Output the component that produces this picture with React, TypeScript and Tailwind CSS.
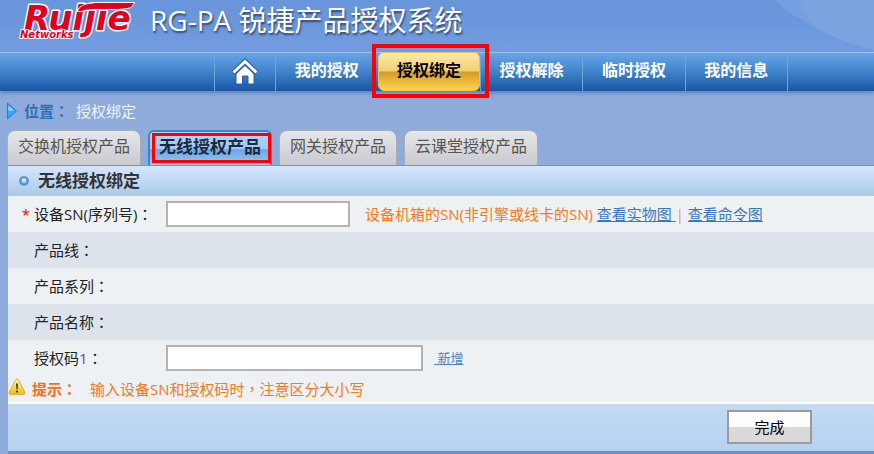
import { useState } from "react";
import type { ReactNode } from "react";

const NAV_ITEMS = ["我的授权", "授权绑定", "授权解除", "临时授权", "我的信息"];
const TABS = ["交换机授权产品", "无线授权产品", "网关授权产品", "云课堂授权产品"];
const INFO_ROWS = ["产品线", "产品系列", "产品名称"];

// Full-width punctuation sits in the middle of its cell
function Punct({ children }: { children: ReactNode }) {
  return <span className="font-['Noto_Sans_CJK_TC',sans-serif]">{children}</span>;
}

function Logo() {
  return (
    <svg width="122" height="46" viewBox="0 0 122 46" role="img" aria-label="Ruijie Networks" className="shrink-0 overflow-visible">
      <g
        fill="#e2001f"
        stroke="#fff"
        strokeWidth="3"
        strokeLinejoin="round"
        paintOrder="stroke"
        fontFamily="DejaVu Sans"
        fontWeight="bold"
        fontStyle="italic"
      >
        <text x="4" y="30" fontSize="34">Ruijie</text>
        {/* Bar that joins the dots of the letters */}
        <path strokeWidth="2" d="M58 11C60 5 68 3 80 3H114L111 7C104 9 98 9 88 9C74 9 66 9 62 11Z" />
        <text x="0" y="38" fontSize="10" strokeWidth="2">Networks</text>
      </g>
    </svg>
  );
}

function HomeIcon() {
  return (
    <svg width="28" height="28" viewBox="0 0 28 28" aria-hidden="true">
      <path d="M2 15L14 3.500L26 15" fill="none" stroke="#2b5f9f" strokeWidth="5" />
      <path d="M2.500 14.500L14 3.500L25.500 14.500" fill="none" stroke="#fff" strokeWidth="3" />
      <path d="M5 16L14 7.500L23 16V26H17V18H11.500V26H5Z" fill="#fff" stroke="#2b5f9f" strokeWidth="1" />
    </svg>
  );
}

function WarningIcon() {
  return (
    <svg width="18" height="18" viewBox="0 0 18 18" aria-hidden="true" className="mb-1 shrink-0">
      <defs>
        <linearGradient id="warn" x1="0" y1="0" x2="0" y2="1">
          <stop offset="0" stopColor="#fff6a0" />
          <stop offset="1" stopColor="#f2ba14" />
        </linearGradient>
      </defs>
      <path
        d="M9 1Q10 1 10.800 2.500L17 14.500Q17.500 16.500 15.500 16.500H2.500Q0.500 16.500 1 14.500L7.200 2.500Q8 1 9 1Z"
        fill="url(#warn)"
        stroke="#d3ae4a"
        strokeLinejoin="round"
      />
      <path d="M8 5.500H10L9.600 11.500H8.400Z" fill="#443c20" />
      <circle cx="9" cy="13.600" r="1.100" fill="#443c20" />
    </svg>
  );
}

export default function App() {
  const [active, setActive] = useState(1);
  const [sn, setSn] = useState("");
  const [code, setCode] = useState("");

  return (
    <div className="min-h-screen overflow-hidden bg-[#8fabdb] font-['Open_Sans','Noto_Sans_CJK_SC',sans-serif] text-[15px] leading-5 text-[#222]">
      {/* Banner */}
      <header className="relative flex h-[52px] items-start gap-2 bg-linear-to-b from-[#6996db] via-[#6b98dc] to-[#769ce1] pl-5">
        <svg
          className="absolute top-0 right-0"
          width="100"
          height="52"
          viewBox="0 0 100 52"
          aria-hidden="true"
        >
          <path d="M0 0C26 22 60 40 100 50V0Z" fill="#769fdf" />
          <path d="M26 0C31 12 36 22 43 28C60 38 80 45 100 50V0Z" fill="#7ca3e0" />
        </svg>
        <Logo />
        <h1 className="relative pt-1 text-[28px] leading-8 whitespace-nowrap text-white [text-shadow:1px_2px_2px_#30466f]">
          RG-PA 锐捷产品授权系统
        </h1>
      </header>

      {/* Main navigation */}
      <nav className="relative flex h-[39px] border-t border-[#9cc4ee] bg-linear-to-b from-[#68a5e6] via-[#3f83cb] to-[#1855a3] pl-[214px] shadow-[0_2px_4px_#5f7fb8]">
        <a href="#home" aria-label="首页" className="flex w-[61px] items-center justify-center border-l border-[#6fa5de]">
          <HomeIcon />
        </a>
        <div className="grid w-[513px] grid-cols-5 border-r border-[#6fa5de]">
          {NAV_ITEMS.map((item, i) => (
            <a
              key={item}
              href="#nav"
              className={
                i === 1
                  ? "relative -mt-px ml-px flex items-center justify-center rounded-md border border-[#e9c25e] bg-[linear-gradient(#fdeaa8,#f3cf72_48%,#d9982a_52%,#fbd650)] pb-1 text-base font-bold text-black"
                  : "flex items-center justify-center border-l border-[#6fa5de] pb-1 text-base font-bold text-white"
              }
            >
              {item}
              {i === 1 && <span className="pointer-events-none absolute -top-[9px] -right-[10px] -bottom-2 -left-[7px] border-4 border-[#f00]" />}
            </a>
          ))}
        </div>
      </nav>

      {/* Breadcrumb */}
      <div className="flex h-[39px] items-center pl-[7px]">
        <svg width="10" height="18" viewBox="0 0 10 18" aria-hidden="true">
          <path d="M0.500 1L9.500 9L0.500 17Z" fill="#3ba6f5" stroke="#1f7fd0" />
          <path d="M1.500 3.500L7 8.500L1.500 9Z" fill="#8fd2ff" />
        </svg>
        <span className="ml-[7px] font-bold text-[#2c70b9]">
          位置<Punct>：</Punct>
        </span>
        <span className="ml-[7px] text-[#eef4ff]">授权绑定</span>
      </div>

      {/* Product tabs */}
      <div className="flex h-[35px] items-stretch gap-[7px] pl-[7px]" role="tablist">
        {TABS.map((tab, i) => (
          <button
            key={tab}
            type="button"
            role="tab"
            aria-selected={active === i}
            onClick={() => setActive(i)}
            className={
              active === i
                ? "relative rounded-t-md border-2 border-b-0 border-[#4a7fc8] bg-[linear-gradient(#b4d5f8,#a0c8f4_50%,#6ba6e8_54%,#9cc6f3)] px-[9px] pb-1 text-[17px] font-bold whitespace-nowrap text-[#1c2a3c]"
                : "rounded-t-lg border border-b-0 border-[#a9adb5] bg-linear-to-b from-[#e6e7ea] to-[#c9cace] px-[10px] pb-1 text-base whitespace-nowrap text-[#555]"
            }
          >
            {tab}
            {active === i && <span className="pointer-events-none absolute top-px -right-px bottom-[2px] left-[2px] border-3 border-[#f00]" />}
          </button>
        ))}
      </div>

      <form className="ml-2 border-b-3 border-[#6c90cf] bg-[#edf1f3]" onSubmit={(e) => e.preventDefault()}>
        <h2 className="flex h-[31px] items-center border-t border-[#7094d0] bg-linear-to-b from-[#d5e6fd] to-[#a9c9e8] text-[17px] font-bold text-[#333]">
          <svg width="12" height="12" viewBox="0 0 12 12" aria-hidden="true" className="mr-2 ml-[10px]">
            <circle cx="6" cy="6" r="5" fill="#5e97d6" />
            <circle cx="6" cy="5.500" r="2.200" fill="#d5e8fb" />
          </svg>
          无线授权绑定
        </h2>

        <div className="flex h-9 items-center">
          <label htmlFor="sn" className="flex w-[158px] shrink-0 whitespace-nowrap">
            <span className="w-[26px] pr-1 text-right text-[#f00]">*</span>
            设备SN(序列号)<Punct>：</Punct>
          </label>
          <input
            id="sn"
            value={sn}
            onChange={(e) => setSn(e.target.value)}
            className="h-[26px] w-[184px] border-2 border-[#b3b3b3] bg-white px-1 outline-none"
          />
          <p className="ml-[15px] whitespace-nowrap text-[#f47b20]">
            设备机箱的SN(非引擎或线卡的SN){" "}
            <a href="#photo" className="whitespace-pre text-[#3a78c2] underline">查看实物图 </a>
            <span className="text-[#f09090]">|</span>{" "}
            <a href="#command" className="text-[#3a78c2] underline">查看命令图</a>
          </p>
        </div>

        {INFO_ROWS.map((row, i) => (
          <div key={row} className={i % 2 === 0 ? "flex h-9 items-center bg-[#dce3ea] pl-[26px]" : "flex h-9 items-center pl-[26px]"}>
            {row}<Punct>：</Punct>
          </div>
        ))}

        <div className="flex h-9 items-center">
          <label htmlFor="code" className="w-[158px] shrink-0 pl-[26px]">
            授权码<span className="text-[#7b3fa0]">1</span><Punct>：</Punct>
          </label>
          <input
            id="code"
            value={code}
            onChange={(e) => setCode(e.target.value)}
            className="h-[26px] w-[257px] border-2 border-[#b3b3b3] bg-white px-1 outline-none"
          />
          <a href="#add" className="ml-[11px] text-[13px] whitespace-pre text-[#4a84c8] underline"> 新增</a>
        </div>

        <p className="flex h-[26px] items-center whitespace-nowrap text-[#f47b20]">
          <WarningIcon />
          <strong className="ml-[6px] w-[58px] text-[#ff6a10]">
            提示<Punct>：</Punct>
          </strong>
          <span>
            输入设备SN和授权码时<Punct>，</Punct>注意区分大小写
          </span>
        </p>

        <div className="flex h-[49px] items-center justify-end border-t-2 border-white bg-linear-to-b from-[#c3dbf2] to-[#b6d2f1] pr-[62px] pb-[2px]">
          <button
            type="submit"
            className="h-[34px] w-[85px] border-2 border-[#9b9b9b] bg-[linear-gradient(#fdfdfd_50%,#d9d9d9_50%)] text-black"
          >
            完成
          </button>
        </div>
      </form>
    </div>
  );
}
